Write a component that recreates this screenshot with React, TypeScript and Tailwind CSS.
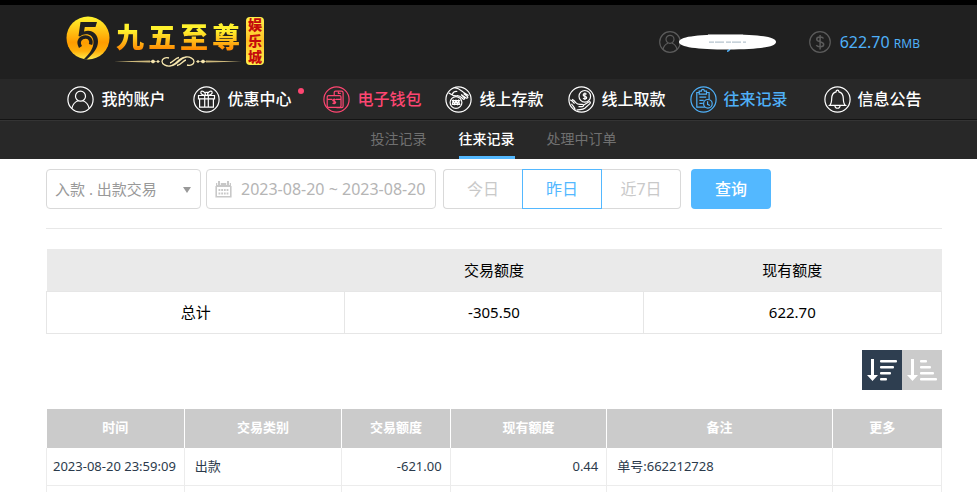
import type { ReactNode } from "react";
import clsx from "clsx";

const columns = [
    { label: "时间", width: "w-[15.4%]" },
    { label: "交易类别", width: "w-[17.6%]" },
    { label: "交易额度", width: "w-[12.1%]" },
    { label: "现有额度", width: "w-[17.5%]" },
    { label: "备注", width: "w-[25.2%]" },
    { label: "更多", width: "w-[12.2%]" },
];

const records = [
    { time: "2023-08-20 23:59:09", type: "出款", amount: "-621.00", balance: "0.44", note: "单号:662212728" },
];

function CircleIcon({ children }: { children: ReactNode }) {
    return (
        <svg viewBox="0 0 27 27" className="w-[27px] h-[27px] shrink-0" fill="none" stroke="currentColor" strokeWidth="1.2" aria-hidden="true">
            <circle cx="13.5" cy="13.5" r="12.6" />
            {children}
        </svg>
    );
}

const AccountIcon = () => (
    <CircleIcon>
        <circle cx="13.5" cy="10.2" r="5" />
        <path d="M4.8 22.5c1-4.3 3.6-6.8 6.3-7.7M22.2 22.5c-1-4.3-3.6-6.8-6.3-7.7" />
    </CircleIcon>
);

const GiftIcon = () => (
    <CircleIcon>
        <path d="M5.5 9.5h16v3.3h-16zM6.6 12.8h13.8v8.4H6.6zM11.7 9.5v11.7M15.3 9.5v11.7" />
        <path d="M12.6 9.2C9.5 9.2 7 7.6 8 5.8s4 .2 4.8 3.1M14.4 9.2c3.1 0 5.6-1.6 4.6-3.4s-4 .2-4.8 3.1M12.3 6.3h2.4v3" />
    </CircleIcon>
);

const WalletIcon = () => (
    <CircleIcon>
        <path d="M11.2 9V6.5c0-.8.5-1.3 1.3-1.3h6c1 0 1.6.6 1.6 1.5v13.6c0 .9-.6 1.4-1.4 1.4h-5.2" />
        <rect x="4.2" y="9.7" width="13.8" height="11.6" rx="1.3" />
        <path d="M4.2 13.3h5M13 13.3h5M15.4 5.6v1.8h2.4" />
        <path d="M12.7 13.8c-.7-.9-3-.7-3 .5 0 1.5 3 .8 3 2.3 0 1.2-2.4 1.3-3.1.3M11.2 12.5v5.7" />
    </CircleIcon>
);

const DepositIcon = () => (
    <CircleIcon>
        <circle cx="11" cy="16.5" r="5.9" />
        <path d="M7.2 18.8l1-4.2 1.5 3.6 1.3-3.6 1.4 3.6 1.3-3.6.9 4.2M6.8 14.7h8.6M6.8 18.3h8.6" />
        <path d="M3.6 6.8c2.6 1.9 4.4 3.3 8.5 2.9M9.5 1.7c4 .4 6.2 2.4 8.4 4.2 2 1.7 4 2.5 5.7 3.7M12.1 9.7c2.5-.3 3.3.8 5.8 3.1 1.2 1 2.3.2 1.4-1l-3.2-3.2M16.1 8.6l5 3.3c1.3.8 2.4-.3 1.3-1.4l-3.8-3M7.3 8.2c1.2-2.6 2.6-3.2 5-2.7" />
    </CircleIcon>
);

const WithdrawIcon = () => (
    <CircleIcon>
        <circle cx="16.8" cy="10.3" r="5.8" />
        <path d="M18.5 8.3c-.8-1.1-3.3-.8-3.3.6 0 1.8 3.5 1 3.5 2.8 0 1.5-2.7 1.6-3.6.4M16.9 6.5v7.6" />
        <path d="M2.3 13.9c1.7.6 2.8 2 4.2 3.7M4.1 13.4c1.5.5 2.6 1.7 3.7 3.2 1 1.2 2.2 1.8 4.2 1.8h2.2c1.8 0 1.8 2.2 0 2.2h-3.7M15.4 19.2l5.3-3.3c1.3-.8 2.3.7 1.2 1.7l-5.1 4.6c-2.2 1.7-5.8 1-8.2 1.9M3.5 17.8c1.2 2.2 3.1 3.2 3.6 6" />
    </CircleIcon>
);

const RecordsIcon = () => (
    <CircleIcon>
        <path d="M9.2 6.5H6.8v14.7h8M16.5 6.5h2.6v6.6M9.2 5.2h2.2c0-2.4 3-2.4 3 0h2.1v3H9.2zM9.4 11.2h6.8M9.4 14.3h4.3M9.4 17.4h3.4" />
        <circle cx="17.9" cy="17.8" r="4.3" />
        <path d="M17.6 15.2v3.1l2.3 1.3" />
    </CircleIcon>
);

const BellIcon = () => (
    <CircleIcon>
        <path d="M5.6 19.4c2-1.5 2-3.6 2.1-7 .1-3.5 1.8-6 4.4-6.6 0-2.3 2.8-2.3 2.8 0 2.6.6 4.3 3.1 4.4 6.6.1 3.4.1 5.5 2.1 7z" />
        <path d="M10.9 19.7c.2 3.4 5 3.4 5.2 0" />
    </CircleIcon>
);

const navItems = [
    { label: "我的账户", icon: AccountIcon, style: "text-white mr-1" },
    { label: "优惠中心", icon: GiftIcon, style: "text-white mr-2", dot: true },
    { label: "电子钱包", icon: WalletIcon, style: "text-[#fd4671]" },
    { label: "线上存款", icon: DepositIcon, style: "text-white" },
    { label: "线上取款", icon: WithdrawIcon, style: "text-white" },
    { label: "往来记录", icon: RecordsIcon, style: "text-[#4fb0f8] mr-3" },
    { label: "信息公告", icon: BellIcon, style: "text-white" },
];

const goldText = "bg-linear-to-b from-[#fff22d] from-30% to-[#ff8a00] to-85% bg-clip-text text-transparent";

function Logo() {
    return (
        <a href="#" className="flex items-start self-start pt-[11px]">
            <svg viewBox="0 0 44 44" className="w-11 h-11" aria-hidden="true">
                <defs>
                    <linearGradient id="gold" x1="0" y1="0" x2="0" y2="1">
                        <stop offset="0" stopColor="#fff52e" />
                        <stop offset="0.6" stopColor="#ff9c00" />
                        <stop offset="0.8" stopColor="#ffae08" />
                        <stop offset="1" stopColor="#ffec50" />
                    </linearGradient>
                </defs>
                <circle cx="22" cy="22" r="21.5" fill="url(#gold)" />
                <path d="M14.500 6H31l-1.500 5H18.800l-.8 4.500c7.500-2.500 14 2 14 10 0 7-5 12.500-11.500 18l-2.500-.5c5.500-5.500 9.500-10.500 9.500-17 0-8-8.500-9.500-13.500-5.500L12.500 20z" fill="#202020" />
                <path d="M14.500 31c-3.500-6 .5-10 5-10 4 0 6.500 3.500 5 7.500" fill="none" stroke="#202020" strokeWidth="3.500" />
            </svg>
            <div className="flex flex-col items-center ml-1 pt-1">
                <span className="flex gap-1 text-[28px] leading-[35px] font-black">
                    <span className={goldText}>九</span>
                    <span className={goldText}>五</span>
                    <span className={goldText}>至</span>
                    <span className={goldText}>尊</span>
                </span>
                <svg viewBox="0 0 128 13" className="w-32 h-[13px]" fill="none" stroke="#f6e6ae" aria-hidden="true">
                    <path d="M0 6.500L36 5.500v2zM128 6.500L92 5.500v2z" fill="#cdb97c" stroke="none" />
                    <path d="M36 6.500l3-2 3 2-3 2zM86 6.500l3-2 3 2-3 2zM42 6.500l2-1.500 2 1.500-2 1.500zM82 6.500l2-1.500 2 1.500-2 1.500z" fill="#f6e6ae" stroke="none" />
                    <path d="M55 3c-4-1-7 1-7 3.500s4 5 8 4.500c6-.7 8-7.500 14-8.500M73 10c4 1 7-1 7-3.500S76 1.500 72 2c-6 .7-8 7.500-14 8.500M56 8c3-.5 5-5 9-5.500M72 5c-3 .5-5 5-9 5.500" strokeWidth="1.300" />
                </svg>
            </div>
            <span className="flex flex-col items-center w-[18px] mt-px ml-1 rounded-[4px] bg-linear-to-b from-[#fff04a] via-[#ffc125] to-[#fff04a] text-sm leading-4 font-black text-[#c40c0c]">
                <span>娱</span>
                <span>乐</span>
                <span>城</span>
            </span>
        </a>
    );
}

function AccountInfo() {
    return (
        <div className="flex items-center text-[#4fb0f8]">
            <svg viewBox="0 0 118 22" className="w-[118px] h-[22px] mr-8" aria-hidden="true">
                <g fill="none" stroke="#5b5b5b" strokeWidth="1.200">
                    <circle cx="11" cy="11" r="10.300" />
                    <circle cx="11" cy="8.300" r="4" />
                    <path d="M4 18.500c.7-3.500 2.700-5.500 5-6.300M18 18.500c-.7-3.500-2.700-5.500-5-6.300" />
                </g>
                <path d="M71 17.500c-1 2.500-1.500 2.700-3 2.700" fill="none" stroke="#4fb0f8" strokeWidth="1.500" />
                <path d="M20 11c0-5 16-7.500 49-7.500S117 6 117 11s-17 7.500-48 7.500S20 16 20 11z" fill="#fff" />
                <path d="M50 11.200h37" stroke="#b5c4ce" strokeWidth="1.200" strokeDasharray="5 1 9 2" />
                <path d="M49 3.500h35" stroke="#999" />
            </svg>
            <svg viewBox="0 0 22 22" className="w-[22px] h-[22px] mr-[9px]" fill="none" stroke="#5b5b5b" strokeWidth="1.200" aria-hidden="true">
                <circle cx="11" cy="11" r="10.300" />
                <path d="M14.500 7.500C13.500 5.500 7.700 5.500 7.700 8.300c0 3.200 7 1.800 7 5.200 0 2.900-6 2.900-7.400.6M11.100 4v14.500" strokeWidth="1.500" />
            </svg>
            <span>
                622.70 <span className="text-xs">RMB</span>
            </span>
        </div>
    );
}

function SortIcon({ widths }: { widths: number[] }) {
    return (
        <svg viewBox="0 0 40 40" className="w-10 h-10" fill="#fff" aria-hidden="true">
            <path d="M9 9h3v16h4l-5.500 6L5 25h4z" />
            {widths.map((width, i) => (
                <rect key={i} x="18" y={10 + i * 6} width={width} height="2.500" rx="1" />
            ))}
        </svg>
    );
}

export default function App() {
    return (
        <div className="min-h-screen bg-white font-['Noto_Sans','Noto_Sans_CJK_SC',sans-serif] text-base text-[#2b3a4b]">
            <header className="border-t-5 border-black bg-[#202020]">
                <div className="flex items-center justify-between h-[74px] pl-[66px] pr-[57px]">
                    <Logo />
                    <AccountInfo />
                </div>
                <nav className="flex justify-center gap-6 pl-3 h-[41px] bg-[#282828] border-b border-[#141414]">
                    {navItems.map(({ label, icon: Icon, style, dot }) => (
                        <a key={label} href="#" className={clsx("relative flex items-center gap-[7px] whitespace-nowrap font-medium", style)}>
                            <Icon />
                            {label}
                            {dot && <span className="absolute top-[9px] -right-[13px] w-[6px] h-[6px] rounded-full bg-[#fd4671]" />}
                        </a>
                    ))}
                </nav>
                <nav className="flex justify-center gap-8 pl-[10px] h-[39px] bg-[#282828] border-t border-[#343434] text-sm leading-9 text-[#707070]">
                    <a href="#">投注记录</a>
                    <a href="#" className="font-medium text-white border-b-3 border-[#53b8ff]">往来记录</a>
                    <a href="#">处理中订单</a>
                </nav>
            </header>

            <main className="pl-[46px] pr-[35px]">
                <form className="flex items-center pt-[10px] pb-[19px] border-b border-[#e8e8e8]">
                    <div className="relative mr-[5px]">
                        <select aria-label="交易类型" className="appearance-none w-[155px] h-10 px-2 rounded-[4px] border border-[#d9d9d9] bg-white text-[15px] text-[#999]">
                            <option>入款 . 出款交易</option>
                        </select>
                        <svg viewBox="0 0 8 6" className="absolute right-[10px] top-[18px] w-2 h-[6px] pointer-events-none" fill="#999" aria-hidden="true">
                            <path d="M0 0h8L4 6z" />
                        </svg>
                    </div>
                    <label className="flex items-center w-[230px] h-10 mr-[7px] pl-2 rounded-[4px] border border-[#d9d9d9]">
                        <svg viewBox="0 0 17 17" className="w-[17px] h-[17px] mr-[9px] shrink-0" fill="none" stroke="#c8c8c8" aria-hidden="true">
                            <path d="M1 2h15v4H1z" fill="#c8c8c8" stroke="none" />
                            <path d="M4 0v4M13 0v4" stroke="#fff" strokeWidth="3.500" />
                            <path d="M4 0v4M13 0v4" strokeWidth="2" />
                            <path d="M1.200 5v10.700h14.600V5" strokeWidth="1.600" />
                            <path d="M3.500 9h10M3.500 12.500h10" strokeWidth="2" strokeDasharray="1.800 0.900" />
                        </svg>
                        <input aria-label="日期" className="w-full min-w-0 text-[#b5b5b5] outline-none" defaultValue="2023-08-20 ~ 2023-08-20" />
                    </label>
                    <div className="flex h-10 mr-[10px] text-[#c9c9c9]">
                        <button type="button" className="w-[79px] border border-r-0 border-[#d9d9d9] rounded-l-[4px]">今日</button>
                        <button type="button" className="w-20 border border-[#53b8ff] text-[#53b8ff]">昨日</button>
                        <button type="button" className="w-[79px] border border-l-0 border-[#d9d9d9] rounded-r-[4px]">近7日</button>
                    </div>
                    <button type="button" className="w-20 h-10 rounded-[4px] bg-[#53b8ff] font-medium text-white">查询</button>
                </form>

                <table className="w-full mt-5 table-fixed border-collapse text-center text-[15px] text-black">
                    <thead>
                        <tr className="h-[42px] bg-[#eaeaea]">
                            <th></th>
                            <th className="font-normal">交易额度</th>
                            <th className="font-normal">现有额度</th>
                        </tr>
                    </thead>
                    <tbody>
                        <tr className="h-[42px]">
                            <td className="border border-[#e6e6e6]">总计</td>
                            <td className="border border-[#e6e6e6]">-305.50</td>
                            <td className="border border-[#e6e6e6]">622.70</td>
                        </tr>
                    </tbody>
                </table>

                <div className="flex justify-end mt-4 mb-[19px]">
                    <button type="button" aria-label="降序" className="bg-[#2e3e50]">
                        <SortIcon widths={[17, 14, 11, 7]} />
                    </button>
                    <button type="button" aria-label="升序" className="bg-[#cbcbcb]">
                        <SortIcon widths={[7, 11, 14, 17]} />
                    </button>
                </div>

                <table className="w-full table-fixed border-collapse text-[13px]">
                    <thead>
                        <tr className="h-[39px] bg-[#cbcbcb] text-white">
                            {columns.map(({ label, width }) => (
                                <th key={label} className={clsx("border-r border-white last:border-r-0 font-bold last:pr-[10px]", width)}>
                                    {label}
                                </th>
                            ))}
                        </tr>
                    </thead>
                    <tbody>
                        {records.map((record) => (
                            <tr key={record.note} className="h-[38px]">
                                <td className="border border-t-0 border-[#ececec] pl-[6px] whitespace-nowrap">{record.time}</td>
                                <td className="border border-t-0 border-[#ececec] pl-[10px]">{record.type}</td>
                                <td className="border border-t-0 border-[#ececec] pr-2 text-right">{record.amount}</td>
                                <td className="border border-t-0 border-[#ececec] pr-2 text-right">{record.balance}</td>
                                <td className="border border-t-0 border-[#ececec] pl-[10px]">{record.note}</td>
                                <td className="border border-t-0 border-[#ececec]"></td>
                            </tr>
                        ))}
                        <tr className="h-[6px]">
                            {columns.map(({ label }) => (
                                <td key={label} className="border-x border-[#ececec]"></td>
                            ))}
                        </tr>
                    </tbody>
                </table>
            </main>
        </div>
    );
}
